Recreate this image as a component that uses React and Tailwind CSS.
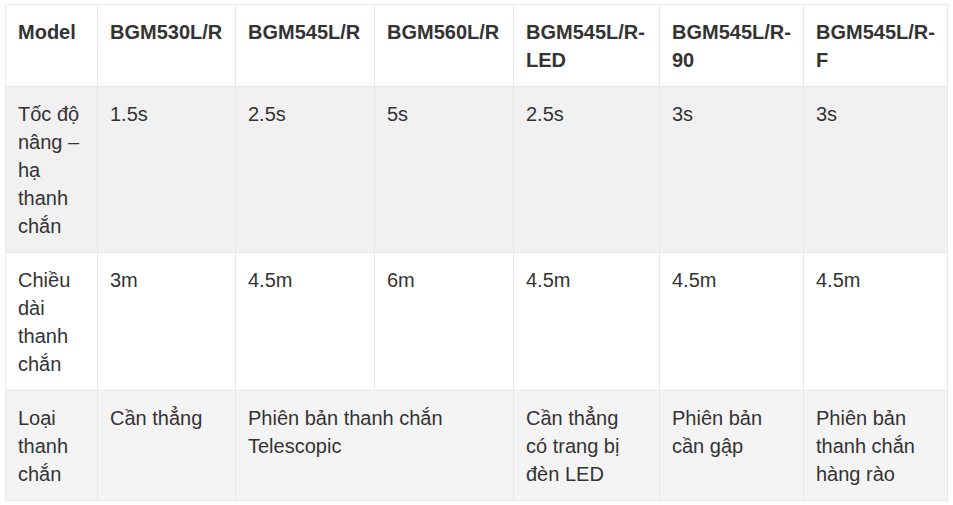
const header = ["Model", "BGM530L/R", "BGM545L/R", "BGM560L/R", "BGM545L/R-LED", "BGM545L/R-90", "BGM545L/R-F"];

const widths = ["w-[92px]", "w-[138px]", "w-[139px]", "w-[139px]", "w-[146px]", "w-[144px]", "w-[144px]"];

const rows = [
  {
    bg: "bg-[#f1f1f1]",
    cells: [["Tốc độ nâng – hạ thanh chắn"], ["1.5s"], ["2.5s"], ["5s"], ["2.5s"], ["3s"], ["3s"]],
  },
  {
    bg: "bg-white",
    cells: [["Chiều dài thanh chắn"], ["3m"], ["4.5m"], ["6m"], ["4.5m"], ["4.5m"], ["4.5m"]],
  },
  {
    bg: "bg-[#f4f4f4]",
    cells: [
      ["Loại thanh chắn"],
      ["Cần thẳng"],
      ["Phiên bản thanh chắn Telescopic", 2],
      ["Cần thẳng có trang bị đèn LED", 1, "pr-[22px]"],
      ["Phiên bản cần gập"],
      ["Phiên bản thanh chắn hàng rào"],
    ],
  },
];

const cell = "border border-[#e8e8e8] pl-[12px] pt-[13px] pb-[12px] align-top text-left";

export default function App() {
  return (
    <div className="bg-white w-[953px] h-[505px] pt-[4px] pl-[5px] font-['Liberation_Sans',Arial,sans-serif] text-[20px] leading-[28px] text-[#333333]">
      <table className="table-fixed border-collapse w-[943px]">
        <colgroup>
          {widths.map((w, i) => (
            <col key={i} className={w} />
          ))}
        </colgroup>
        <thead>
          <tr className="bg-white">
            {header.map((h) => (
              <th key={h} className={`${cell} pr-[12px] font-bold`}>
                {h}
              </th>
            ))}
          </tr>
        </thead>
        <tbody>
          {rows.map((r, i) => (
            <tr key={i} className={r.bg}>
              {r.cells.map(([t, span, pad], j) => (
                <td key={j} colSpan={span || 1} className={`${cell} ${pad || "pr-[12px]"}`}>
                  {t}
                </td>
              ))}
            </tr>
          ))}
        </tbody>
      </table>
    </div>
  );
}
